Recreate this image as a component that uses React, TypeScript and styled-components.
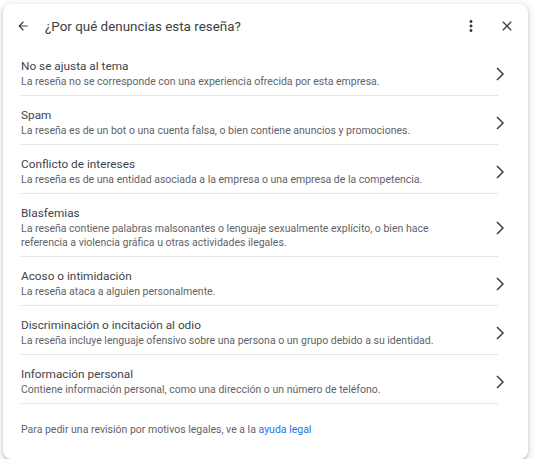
import React from 'react'
import styled, { createGlobalStyle } from 'styled-components'

const GlobalStyle = createGlobalStyle`
    html, body {
        margin: 0;
        padding: 0;
        background: #fff;
    }
    body {
        font-family: Roboto, 'Liberation Sans', Arial, sans-serif;
        -webkit-font-smoothing: antialiased;
    }
`

const Page = styled.div`
    padding: 4px 0 0 3px;
`

const Card = styled.div`
    width: 525px;
    height: 455px;
    box-sizing: border-box;
    background: #fff;
    border-radius: 8px;
    box-shadow: 0 1px 2px rgba(60, 64, 67, 0.3), 0 2px 6px 2px rgba(60, 64, 67, 0.15);
    display: flex;
    flex-direction: column;
`

const Header = styled.div`
    height: 43px;
    display: flex;
    align-items: center;
    padding: 0 13px;
    color: #3c4043;
`

const IconButton = styled.span<{ $size: number; $gap?: number }>`
    display: flex;
    width: ${(p) => p.$size}px;
    height: ${(p) => p.$size}px;
    margin-left: ${(p) => p.$gap ?? 0}px;
    color: #3c4043;
    cursor: pointer;

    svg {
        width: 100%;
        height: 100%;
        fill: currentColor;
    }
`

const Title = styled.div`
    flex: 1;
    margin-left: 15px;
    padding-top: 1px;
    font-size: 13.4px;
    color: #3c4043;
`

const List = styled.div`
    display: flex;
    flex-direction: column;
`

const Item = styled.div`
    display: flex;
    align-items: center;
    margin: 0 30px 0 18px;
    padding: 11px 0 6px;
    border-bottom: 1px solid #e3e5e8;
    cursor: pointer;
`

const ItemText = styled.div`
    flex: 1;
    min-width: 0;
    padding-right: 30px;
`

const ItemTitle = styled.div`
    font-size: 11.8px;
    line-height: 17px;
    color: #41454a;
`

const ItemDesc = styled.div`
    font-size: 10.5px;
    line-height: 14px;
    color: #5f6368;
`

const Chevron = styled.svg`
    flex: none;
    width: 24px;
    height: 24px;
    margin-right: -14px;
    fill: none;
    stroke: #3c4043;
    stroke-width: 1.5;
`

const Footer = styled.div`
    padding: 19px 18px 0;
    font-size: 10.5px;
    line-height: 14px;
    color: #5f6368;
`

const Link = styled.a`
    color: #1a73e8;
    text-decoration: none;
`

const reasons = [
    {
        title: 'No se ajusta al tema',
        desc: 'La reseña no se corresponde con una experiencia ofrecida por esta empresa.',
    },
    {
        title: 'Spam',
        desc: 'La reseña es de un bot o una cuenta falsa, o bien contiene anuncios y promociones.',
    },
    {
        title: 'Conflicto de intereses',
        desc: 'La reseña es de una entidad asociada a la empresa o una empresa de la competencia.',
    },
    {
        title: 'Blasfemias',
        desc: 'La reseña contiene palabras malsonantes o lenguaje sexualmente explícito, o bien hace referencia a violencia gráfica u otras actividades ilegales.',
    },
    {
        title: 'Acoso o intimidación',
        desc: 'La reseña ataca a alguien personalmente.',
    },
    {
        title: 'Discriminación o incitación al odio',
        desc: 'La reseña incluye lenguaje ofensivo sobre una persona o un grupo debido a su identidad.',
    },
    {
        title: 'Información personal',
        desc: 'Contiene información personal, como una dirección o un número de teléfono.',
    },
]

export default function App() {
    return (
        <>
            <GlobalStyle />
            <Page>
                <Card>
                    <Header>
                        <IconButton $size={14}>
                            <svg viewBox="0 0 24 24">
                                <path d="M20 11H7.83l5.59-5.59L12 4l-8 8 8 8 1.41-1.41L7.83 13H20v-2z" />
                            </svg>
                        </IconButton>
                        <Title>¿Por qué denuncias esta reseña?</Title>
                        <IconButton $size={18}>
                            <svg viewBox="0 0 24 24">
                                <path d="M12 8c1.1 0 2-.9 2-2s-.9-2-2-2-2 .9-2 2 .9 2 2 2zm0 2c-1.1 0-2 .9-2 2s.9 2 2 2 2-.9 2-2-.9-2-2-2zm0 6c-1.1 0-2 .9-2 2s.9 2 2 2 2-.9 2-2-.9-2-2-2z" />
                            </svg>
                        </IconButton>
                        <IconButton $size={16} $gap={19}>
                            <svg viewBox="0 0 24 24">
                                <path d="M19 6.41L17.59 5 12 10.59 6.41 5 5 6.41 10.59 12 5 17.59 6.41 19 12 13.41 17.59 19 19 17.59 13.41 12z" />
                            </svg>
                        </IconButton>
                    </Header>
                    <List>
                        {reasons.map((r) => (
                            <Item key={r.title}>
                                <ItemText>
                                    <ItemTitle>{r.title}</ItemTitle>
                                    <ItemDesc>{r.desc}</ItemDesc>
                                </ItemText>
                                <Chevron viewBox="0 0 24 24">
                                    <polyline points="9,6 15,12 9,18" />
                                </Chevron>
                            </Item>
                        ))}
                    </List>
                    <Footer>
                        Para pedir una revisión por motivos legales, ve a la <Link href="#">ayuda legal</Link>
                    </Footer>
                </Card>
            </Page>
        </>
    )
}
